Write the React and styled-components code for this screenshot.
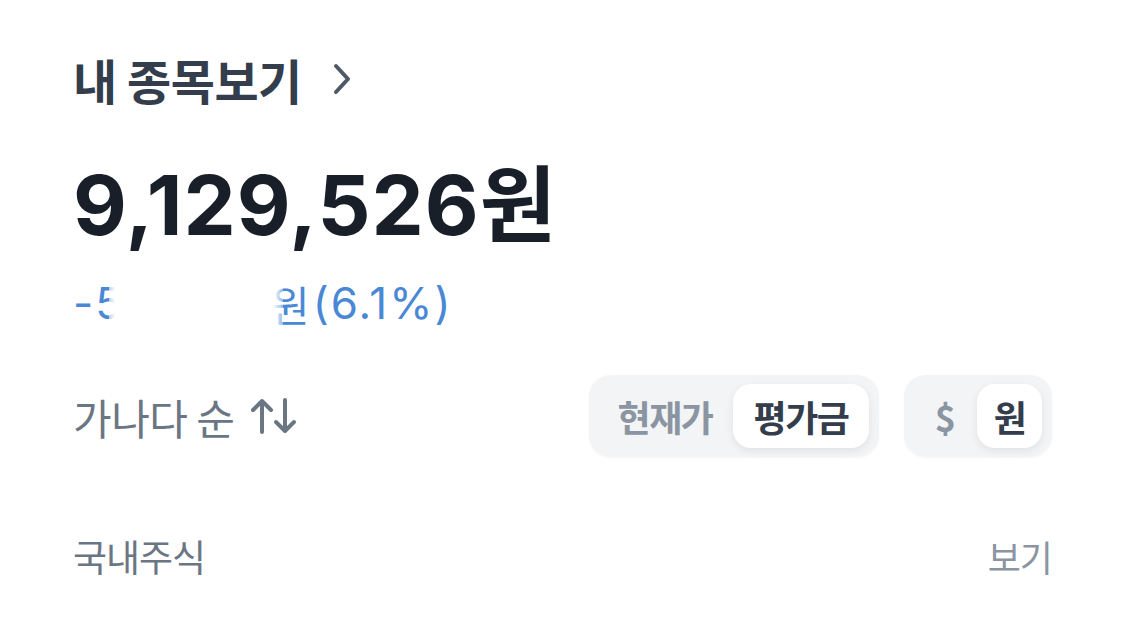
import styled, { createGlobalStyle } from 'styled-components';

const GlobalStyle = createGlobalStyle`
  html, body {
    margin: 0;
    padding: 0;
    background: #fff;
  }
  body {
    font-family: Inter, "Noto Sans CJK KR", sans-serif;
    -webkit-font-smoothing: antialiased;
  }
`

const ChevronRight = () => (
  <svg width="20" height="32" viewBox="0 0 20 32" fill="none">
    <path d="M4 3l12 13L4 29" stroke="#4e5968" strokeWidth="4" strokeLinecap="round" strokeLinejoin="round" />
  </svg>
);

const SortIcon = () => (
  <svg width="46" height="38" viewBox="0 0 46 38" fill="none">
    <path d="M11 35V4M2 13l9-9 9 9" stroke="#6b7684" strokeWidth="4" strokeLinecap="round" strokeLinejoin="round" />
    <path d="M34 3v31M25 25l9 9 9-9" stroke="#6b7684" strokeWidth="4" strokeLinecap="round" strokeLinejoin="round" />
  </svg>
);

const App = () => (
  <>
    <GlobalStyle />
    <Page>
      <Header>
        <Title>내 종목보기</Title>
        <ChevronRight />
      </Header>
      <Amount>9,129,526원</Amount>
      <ChangeRow>
        <Change>
          <Hidden>-593,079</Hidden>
          <Won>원</Won>
          <Rate>(6.1%)</Rate>
          <Mask />
        </Change>
      </ChangeRow>
      <Controls>
        <Sort>
          가나다 순
          <SortIcon />
        </Sort>
        <Toggles>
          <Segment>
            <Option>현재가</Option>
            <Option $active>평가금</Option>
          </Segment>
          <Segment>
            <Option $narrow>$</Option>
            <Option $active $narrow>원</Option>
          </Segment>
        </Toggles>
      </Controls>
      <Section>
        <SectionTitle>국내주식</SectionTitle>
        <More>보기</More>
      </Section>
    </Page>
  </>
);

const Page = styled.div`
  display: flex;
  flex-direction: column;
  width: 1125px;
  height: 630px;
  padding: 0 73px;
  box-sizing: border-box;
  background: #fff;
  overflow: hidden;
`

const Header = styled.div`
  display: flex;
  align-items: center;
  gap: 30px;
  height: 158px;
  flex: 0 0 auto;
`

const Title = styled.h1`
  margin: 0;
  font-family: "Noto Sans CJK KR", sans-serif;
  font-size: 48px;
  font-weight: 700;
  letter-spacing: -0.5px;
  color: #333d4b;
`

const Amount = styled.div`
  display: flex;
  align-items: center;
  height: 78px;
  padding-top: 4px;
  box-sizing: border-box;
  flex: 0 0 auto;
  font-family: Inter, "Noto Sans CJK KR", sans-serif;
  font-size: 83px;
  font-weight: 700;
  letter-spacing: 1px;
  color: #191f28;
`

const ChangeRow = styled.div`
  display: flex;
  align-items: center;
  height: 130px;
  padding-top: 4px;
  box-sizing: border-box;
  flex: 0 0 auto;
`

const Change = styled.div`
  position: relative;
  display: flex;
  align-items: center;
  font-family: Inter, "Noto Sans CJK KR", sans-serif;
  font-size: 44px;
  font-weight: 400;
  color: #4a88d6;
  white-space: pre;
`

const Hidden = styled.span`
  display: inline-block;
  width: 198px;
  overflow: hidden;
  letter-spacing: 2px;
`

const Won = styled.span`
  font-family: "Noto Sans CJK KR", sans-serif;
  font-size: 42px;
`

const Rate = styled.span`
  margin-left: 3px;
  letter-spacing: 2px;
`

const Mask = styled.span`
  position: absolute;
  top: -4px;
  bottom: -4px;
  left: 36px;
  width: 174px;
  background: linear-gradient(90deg, rgba(255, 255, 255, 0.6), #fff 6px, #fff calc(100% - 10px), rgba(255, 255, 255, 0.4));
`

const Controls = styled.div`
  display: flex;
  align-items: center;
  justify-content: space-between;
  height: 100px;
  flex: 0 0 auto;
`

const Sort = styled.div`
  display: flex;
  align-items: center;
  gap: 17px;
  font-family: "Noto Sans CJK KR", sans-serif;
  font-size: 42px;
  font-weight: 400;
  letter-spacing: -0.5px;
  color: #6b7684;
`

const Toggles = styled.div`
  display: flex;
  gap: 25px;
`

const Segment = styled.div`
  display: flex;
  align-items: center;
  height: 82px;
  padding: 0 ${p => (p.$tight ? '8px' : '10px')} 0 0;
  box-sizing: border-box;
  border-radius: 22px;
  background: #f2f4f6;
  box-shadow: 0 1px 3px rgba(0, 0, 0, 0.04);
`

const Option = styled.div`
  display: flex;
  align-items: center;
  justify-content: center;
  height: 64px;
  padding: ${p => (p.$narrow ? '0 15px' : '0 20px')};
  min-width: ${p => (p.$narrow ? '35px' : '96px')};
  border-radius: 18px;
  background: ${p => (p.$active ? '#fff' : 'transparent')};
  box-shadow: ${p => (p.$active ? '0 3px 8px rgba(0, 0, 0, 0.08)' : 'none')};
  font-family: "Noto Sans CJK KR", Inter, sans-serif;
  font-size: 36px;
  font-weight: ${p => (p.$active ? 700 : 600)};
  letter-spacing: -1.5px;
  color: ${p => (p.$active ? '#333d4b' : '#8b95a1')};
  margin-left: ${p => (p.$active ? '0' : '8px')};
`

const Section = styled.div`
  display: flex;
  align-items: center;
  justify-content: space-between;
  height: 180px;
  flex: 0 0 auto;
`

const SectionTitle = styled.div`
  font-family: "Noto Sans CJK KR", sans-serif;
  font-size: 37px;
  letter-spacing: -1px;
  color: #6b7684;
`

const More = styled.div`
  font-family: "Noto Sans CJK KR", sans-serif;
  font-size: 36px;
  letter-spacing: -1px;
  color: #8b95a1;
`

export default App;
